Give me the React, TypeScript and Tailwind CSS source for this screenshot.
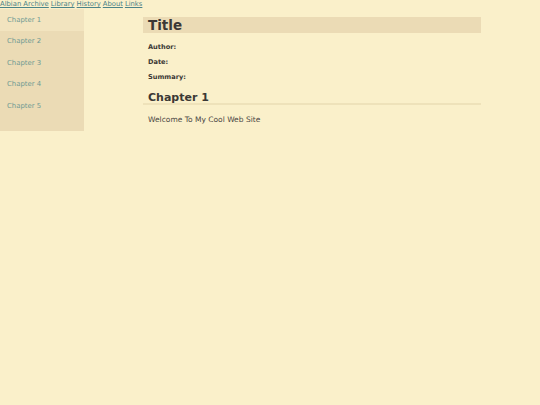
import React from "react";

const chapters = ["Chapter 1", "Chapter 2", "Chapter 3", "Chapter 4", "Chapter 5"];
const navLinks = ["Albian Archive", "Library", "History", "About", "Links"];

export default function App() {
  return (
    <div
      className="min-h-[405px] w-full bg-[#faf0ca] text-[#3b3835]"
      style={{ fontFamily: '"DejaVu Sans", Verdana, sans-serif' }}
    >
      <nav className="flex h-[9px] items-center gap-[2px] text-[6.8px] leading-[9px]">
        {navLinks.map((l) => (
          <a key={l} href="#" className="text-[#4b8388] underline">
            {l}
          </a>
        ))}
      </nav>
      <div className="flex">
        <aside className="flex h-[122px] w-[84px] shrink-0 flex-col bg-[#ebdbb5] pb-[14px]">
          {chapters.map((c, i) => (
            <a
              key={c}
              href="#"
              className={
                "flex h-[21.5px] items-center pl-[7px] text-[6.9px] text-[#6f9a93] " +
                (i === 0 ? "bg-[#f2e4bf]" : "")
              }
            >
              {c}
            </a>
          ))}
        </aside>
        <main className="flex flex-1 justify-center pt-[8px]">
          <div className="w-[338px]">
            <h1 className="flex h-[16px] items-center bg-[#ebdbb5] pl-[5px] text-[13.5px] font-bold leading-[16px] text-[#3b3835]">
              Title
            </h1>
            <div className="mt-[11px] flex flex-col gap-[8px] pl-[5px] text-[6.6px] font-bold leading-[7px]">
              <div>Author:</div>
              <div>Date:</div>
              <div>Summary:</div>
            </div>
            <h2 className="mt-[11px] border-b-2 border-[#eee2ba] pl-[5px] text-[11px] font-bold leading-[11px]">
              Chapter 1
            </h2>
            <p className="mt-[10px] pl-[5px] text-[7.5px] leading-[9px] text-[#4a4744]">
              Welcome To My Cool Web Site
            </p>
          </div>
        </main>
      </div>
    </div>
  );
}
